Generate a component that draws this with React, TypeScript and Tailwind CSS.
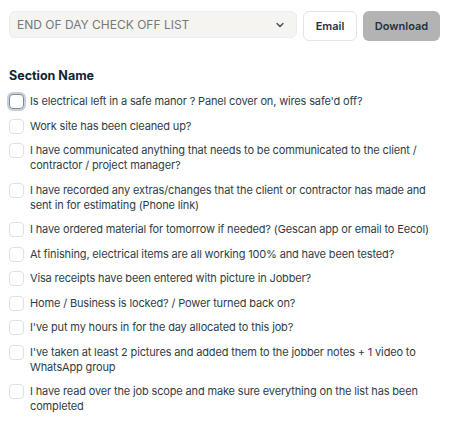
import { ChevronDown } from "lucide-react";

const items = [
  "Is electrical left in a safe manor ? Panel cover on, wires safe'd off?",
  "Work site has been cleaned up?",
  "I have communicated anything that needs to be communicated to the client / contractor / project manager?",
  "I have recorded any extras/changes that the client or contractor has made and sent in for estimating (Phone link)",
  "I have ordered material for tomorrow if needed? (Gescan app or email to Eecol)",
  "At finishing, electrical items are all working 100% and have been tested?",
  "Visa receipts have been entered with picture in Jobber?",
  "Home / Business is locked? / Power turned back on?",
  "I've put my hours in for the day allocated to this job?",
  "I've taken at least 2 pictures and added them to the jobber notes + 1 video to WhatsApp group",
  "I have read over the job scope and make sure everything on the list has been completed",
];

export default function App() {
  return (
    <div className="w-[450px] min-h-[423px] bg-white px-[9px] pt-[11px] font-['Inter',sans-serif] text-[#2f3d47]">
      {/* Toolbar */}
      <div className="flex items-start gap-[6px] pr-[1px]">
        <button className="flex h-[27px] flex-1 items-center justify-between rounded-md border border-[#efede8] bg-[#f5f4f0] pl-[7px] pr-[10px] text-[12px] text-[#74797e]">
          <span>END OF DAY CHECK OFF LIST</span>
          <ChevronDown className="h-[12px] w-[12px] text-[#3a4750]" strokeWidth={2.5} />
        </button>
        <button className="h-[30px] w-[54px] rounded-md border border-[#e3e5e8] bg-white text-[11px] font-semibold text-[#1f3340]">
          Email
        </button>
        <button className="h-[30px] w-[77px] rounded-md bg-[#b3b3b3] text-[11px] font-semibold text-[#1f3340]">
          Download
        </button>
      </div>

      <h2 className="mt-[27px] text-[12.5px] font-bold leading-[16px] text-[#0f2536]">Section Name</h2>

      <ul className="mt-[10px] flex flex-col gap-[9.5px]">
        {items.map((text, i) => (
          <li key={i} className="flex items-start gap-[6px]">
            <span
              className={
                i === 0
                  ? "h-[15px] w-[15px] rounded-[4px] border border-[#7d8c97] bg-white ring-2 ring-[#c8d0d6]"
                  : "h-[15px] w-[15px] rounded-[4px] border border-[#dde1e4] bg-white"
              }
            />
            <span className="flex-1 text-[11px] leading-[15px] tracking-[-0.15px]">{text}</span>
          </li>
        ))}
      </ul>
    </div>
  );
}
